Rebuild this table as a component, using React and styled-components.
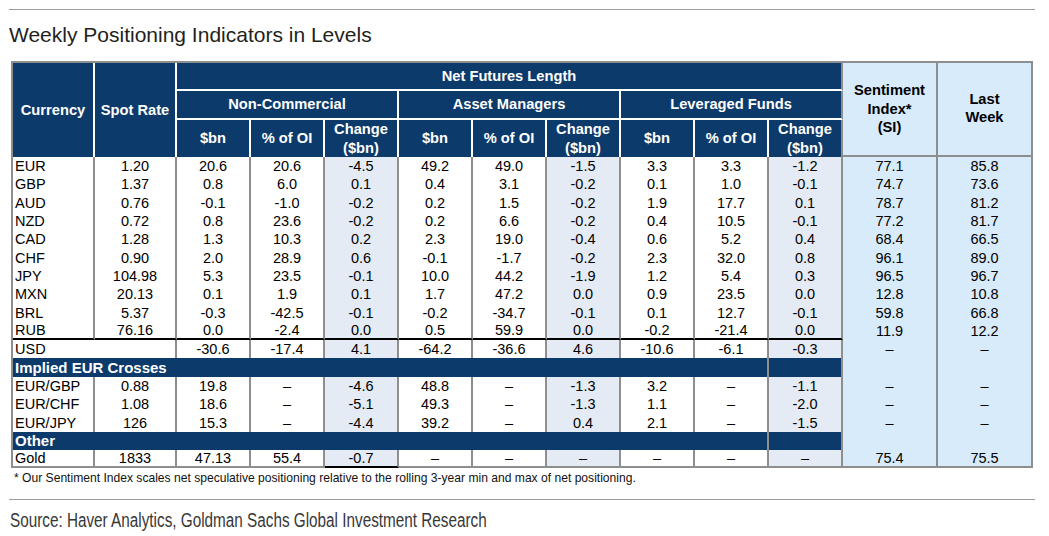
import React from "react";
import styled, { createGlobalStyle } from "styled-components";

const Global = createGlobalStyle`
  html, body { margin: 0; padding: 0; background: #ffffff; }
  body { font-family: "Liberation Sans", Arial, sans-serif; color: #000; }
`;

const NAVY = "#0c3a6b";
const GRID = "#8e8e8e";
const CHG = "#e5ebf5";
const SENTI = "#d8ebfb";

const Page = styled.div`
  width: 1049px;
  height: 536px;
  box-sizing: border-box;
  padding: 9px 14px 0 9px;
  display: flex;
  flex-direction: column;
`;

const Rule = styled.div`
  height: 1px;
  background: #9c9c9c;
  width: 1026px;
`;

const Title = styled.h1`
  margin: 13px 0 0 0;
  font-family: "Liberation Sans", Arial, sans-serif;
  font-weight: normal;
  font-size: 21px;
  line-height: 24px;
  color: #231f20;
`;

const Grid = styled.div`
  margin: 14px 0 0 2px;
  display: grid;
  width: 1022px;
  box-sizing: border-box;
  border-top: 2px solid ${GRID};
  border-left: 2px solid ${GRID};
  grid-template-columns: 82px 82px repeat(9, 74px) 95px 95px;
  grid-template-rows: 28px 29px 37px repeat(10, 18.3px) 18px 19px repeat(3, 18.33px) 18px 18px;
`;

const HeadCell = styled.div`
  grid-column: span ${(p) => p.$span || 1};
  grid-row: span ${(p) => p.$rows || 1};
  box-sizing: border-box;
  background: ${NAVY};
  color: #fff;
  font-weight: bold;
  font-size: 14.7px;
  line-height: 18.5px;
  text-align: center;
  display: flex;
  align-items: center;
  justify-content: center;
  border-right: 2px solid ${(p) => (p.$edge ? GRID : "#ffffff")};
  border-bottom: ${(p) => (p.$under ? "2px solid #ffffff" : "none")};
`;

const SentiHead = styled.div`
  grid-row: span 3;
  box-sizing: border-box;
  background: ${SENTI};
  color: #000;
  font-weight: bold;
  font-size: 14.7px;
  line-height: 18.5px;
  text-align: center;
  display: flex;
  align-items: center;
  justify-content: center;
  border-right: 2px solid ${GRID};
  border-bottom: 2px solid ${GRID};
  padding-bottom: ${(p) => p.$lift || 0}px;
`;

const toneBg = { plain: "#ffffff", chg: CHG, senti: SENTI };

const BodyCell = styled.div`
  grid-column: span ${(p) => p.$span || 1};
  box-sizing: border-box;
  background: ${(p) => toneBg[p.$tone || "plain"]};
  font-size: 14.5px;
  line-height: 16px;
  display: flex;
  align-items: center;
  justify-content: ${(p) => (p.$left ? "flex-start" : "center")};
  padding-left: ${(p) => (p.$left ? 2 : 0)}px;
  border-right: 2px solid ${GRID};
  border-bottom: ${(p) =>
    p.$bottom === "black"
      ? "2px solid #000"
      : p.$bottom === "grey"
      ? `2px solid ${GRID}`
      : "none"};
  white-space: nowrap;
`;

const BandCell = styled.div`
  grid-column: span ${(p) => p.$span || 1};
  box-sizing: border-box;
  background: ${NAVY};
  color: #fff;
  font-weight: bold;
  font-size: 15px;
  display: flex;
  align-items: center;
  padding-left: 2px;
  border-right: 2px solid ${GRID};
`;

const Note = styled.div`
  margin: 3px 0 0 5px;
  font-size: 12.1px;
  line-height: 14px;
  color: #111;
`;

const BottomRule = styled(Rule)`
  margin-top: 14px;
`;

const Source = styled.div`
  margin: 8px 0 0 1px;
  height: 24px;
`;

const SourceText = styled.span`
  display: inline-block;
  font-family: "Liberation Sans", Arial, sans-serif;
  font-size: 19.5px;
  line-height: 24px;
  color: #383838;
  white-space: nowrap;
  transform: scaleX(0.784);
  transform-origin: left center;
`;

const main = [
  ["EUR", "1.20", "20.6", "20.6", "-4.5", "49.2", "49.0", "-1.5", "3.3", "3.3", "-1.2", "77.1", "85.8"],
  ["GBP", "1.37", "0.8", "6.0", "0.1", "0.4", "3.1", "-0.2", "0.1", "1.0", "-0.1", "74.7", "73.6"],
  ["AUD", "0.76", "-0.1", "-1.0", "-0.2", "0.2", "1.5", "-0.2", "1.9", "17.7", "0.1", "78.7", "81.2"],
  ["NZD", "0.72", "0.8", "23.6", "-0.2", "0.2", "6.6", "-0.2", "0.4", "10.5", "-0.1", "77.2", "81.7"],
  ["CAD", "1.28", "1.3", "10.3", "0.2", "2.3", "19.0", "-0.4", "0.6", "5.2", "0.4", "68.4", "66.5"],
  ["CHF", "0.90", "2.0", "28.9", "0.6", "-0.1", "-1.7", "-0.2", "2.3", "32.0", "0.8", "96.1", "89.0"],
  ["JPY", "104.98", "5.3", "23.5", "-0.1", "10.0", "44.2", "-1.9", "1.2", "5.4", "0.3", "96.5", "96.7"],
  ["MXN", "20.13", "0.1", "1.9", "0.1", "1.7", "47.2", "0.0", "0.9", "23.5", "0.0", "12.8", "10.8"],
  ["BRL", "5.37", "-0.3", "-42.5", "-0.1", "-0.2", "-34.7", "-0.1", "0.1", "12.7", "-0.1", "59.8", "66.8"],
  ["RUB", "76.16", "0.0", "-2.4", "0.0", "0.5", "59.9", "0.0", "-0.2", "-21.4", "0.0", "11.9", "12.2"],
];

const usd = ["USD", "-30.6", "-17.4", "4.1", "-64.2", "-36.6", "4.6", "-10.6", "-6.1", "-0.3", "–", "–"];

const crosses = [
  ["EUR/GBP", "0.88", "19.8", "–", "-4.6", "48.8", "–", "-1.3", "3.2", "–", "-1.1", "–", "–"],
  ["EUR/CHF", "1.08", "18.6", "–", "-5.1", "49.3", "–", "-1.3", "1.1", "–", "-2.0", "–", "–"],
  ["EUR/JPY", "126", "15.3", "–", "-4.4", "39.2", "–", "0.4", "2.1", "–", "-1.5", "–", "–"],
];

const gold = ["Gold", "1833", "47.13", "55.4", "-0.7", "–", "–", "–", "–", "–", "–", "75.4", "75.5"];

const toneOf = (i) => (i === 4 || i === 7 || i === 10 ? "chg" : i >= 11 ? "senti" : "plain");

function Row({ cells, rowKey, bottom, goldRow }) {
  return cells.map((v, i) => {
    let b;
    if (bottom === "black" && i <= 10) b = "black";
    if (goldRow) b = i === 4 ? "black" : "grey";
    return (
      <BodyCell key={rowKey + i} $tone={toneOf(i)} $left={i === 0} $bottom={b}>
        {v}
      </BodyCell>
    );
  });
}

function Section({ label, k }) {
  return (
    <>
      <BandCell $span={10}>{label}</BandCell>
      <BandCell />
      <BodyCell key={k + "s1"} $tone="senti" />
      <BodyCell key={k + "s2"} $tone="senti" />
    </>
  );
}

const groups = ["Non-Commercial", "Asset Managers", "Leveraged Funds"];

export default function App() {
  return (
    <Page>
      <Global />
      <Rule />
      <Title>Weekly Positioning Indicators in Levels</Title>
      <Grid>
        <HeadCell $rows={3}>Currency</HeadCell>
        <HeadCell $rows={3}>Spot Rate</HeadCell>
        <HeadCell $span={9} $under $edge>
          Net Futures Length
        </HeadCell>
        <SentiHead>
          Sentiment
          <br />
          Index*
          <br />
          (SI)
        </SentiHead>
        <SentiHead $lift={2}>
          Last
          <br />
          Week
        </SentiHead>
        {groups.map((g, i) => (
          <HeadCell key={g} $span={3} $under $edge={i === 2}>
            {g}
          </HeadCell>
        ))}
        {groups.map((g, gi) =>
          ["$bn", "% of OI", "chg"].map((h, hi) => (
            <HeadCell key={g + h} $edge={gi === 2 && hi === 2}>
              {h === "chg" ? (
                <span>
                  Change
                  <br />
                  ($bn)
                </span>
              ) : (
                h
              )}
            </HeadCell>
          ))
        )}
        {main.map((r, ri) => (
          <Row key={r[0]} rowKey={r[0]} cells={r} bottom={ri === main.length - 1 ? "black" : undefined} />
        ))}
        <BodyCell $span={2} $left>
          USD
        </BodyCell>
        {usd.slice(1).map((v, j) => (
          <BodyCell key={"usd" + j} $tone={toneOf(j + 2)}>
            {v}
          </BodyCell>
        ))}
        <Section label="Implied EUR Crosses" k="imp" />
        {crosses.map((r) => (
          <Row key={r[0]} rowKey={r[0]} cells={r} />
        ))}
        <Section label="Other" k="oth" />
        <Row rowKey="gold" cells={gold} goldRow />
      </Grid>
      <Note>
        * Our Sentiment Index scales net speculative positioning relative to the rolling 3-year min and max of net
        positioning.
      </Note>
      <BottomRule />
      <Source>
        <SourceText>Source: Haver Analytics, Goldman Sachs Global Investment Research</SourceText>
      </Source>
    </Page>
  );
}
